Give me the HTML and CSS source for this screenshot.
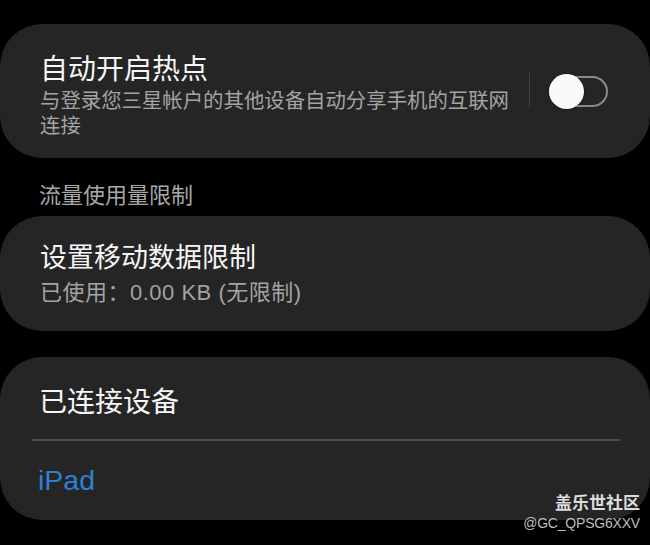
FILE: index.html
```html
<!DOCTYPE html>
<html lang="zh">
<head>
<meta charset="utf-8">
<link rel="stylesheet" href="styles.css">
</head>
<body>
<div class="page">
  <section class="card card-hotspot">
    <div class="hotspot-text">
      <div class="title">自动开启热点</div>
      <div class="sub">与登录您三星帐户的其他设备自动分享手机的互联网连接</div>
    </div>
    <div class="vdivider"></div>
    <div class="toggle"><span class="knob"></span></div>
  </section>

  <div class="section-header">流量使用量限制</div>

  <section class="card card-limit">
    <div class="title t27">设置移动数据限制</div>
    <div class="sub sub-limit">已使用：0.00 KB (无限制)</div>
  </section>

  <section class="card card-devices">
    <div class="title">已连接设备</div>
    <div class="hdivider"></div>
    <div class="device">iPad</div>
  </section>

  <div class="watermark">
    <div class="wm-title">盖乐世社区</div>
    <div class="wm-id">@GC_QPSG6XXV</div>
  </div>
</div>
</body>
</html>
```

FILE: styles.css
```css
* { box-sizing: border-box; }
html, body {
  margin: 0;
  padding: 0;
  background: #000;
}
body {
  font-family: "Noto Sans CJK SC", "Noto Sans", sans-serif;
  color: #f4f4f4;
  width: 650px;
  height: 545px;
  overflow: hidden;
}
.page {
  position: relative;
  height: 545px;
  display: flex;
  flex-direction: column;
  padding-top: 24px;
}
.card {
  background: #252525;
  border-radius: 42px;
  width: 650px;
}
.card-hotspot {
  height: 134px;
  display: flex;
  align-items: flex-start;
  padding: 25px 0 0 40px;
}
.hotspot-text {
  width: 480px;
}
.title {
  font-size: 28px;
  line-height: 36px;
  color: #f6f6f6;
}
.title.t27 { font-size: 27px; line-height: 34px; }
.sub {
  font-size: 20.4px;
  line-height: 24.5px;
  color: #a3a3a3;
  margin-top: 2px;
}
.vdivider {
  width: 1px;
  height: 34px;
  background: #444;
  margin: 24px 0 0 9px;
}
.toggle {
  position: relative;
  width: 59px;
  height: 31px;
  border: 2px solid #8a8a8a;
  border-radius: 16px;
  margin: 27px 0 0 19px;
}
.knob {
  position: absolute;
  left: -2px;
  top: -4px;
  width: 35px;
  height: 35px;
  border-radius: 50%;
  background: #fafafa;
  box-shadow: 0 0 2px rgba(0,0,0,0.6);
}
.section-header {
  font-size: 22px;
  line-height: 28px;
  color: #a8a8a8;
  padding: 21px 0 9px 39px;
}
.card-limit {
  height: 115px;
  padding: 23px 0 0 40px;
}
.sub-limit {
  font-family: "Liberation Sans", "Noto Sans CJK SC", sans-serif;
  margin-top: 7px;
  font-size: 22px;
  line-height: 26px;
  letter-spacing: 0.5px;
}
.card-devices {
  margin-top: 26px;
  height: 163px;
  padding-top: 25px;
  display: flex;
  flex-direction: column;
}
.card-devices .title {
  padding-left: 39px;
}
.hdivider {
  height: 2px;
  background: #4a4a4a;
  margin: 21px 30px 0 32px;
}
.device {
  font-family: "Liberation Sans", "Noto Sans CJK SC", sans-serif;
  font-size: 28.5px;
  line-height: 36px;
  color: #2d7fd2;
  padding-left: 38px;
  margin-top: 21px;
}
.watermark {
  position: absolute;
  right: 10px;
  top: 490px;
  text-align: right;
}
.wm-title {
  font-size: 17px;
  line-height: 23px;
  font-weight: 700;
  color: #dcdcdc;
}
.wm-id {
  font-family: "Liberation Sans", sans-serif;
  font-size: 14px;
  line-height: 21px;
  color: #bdbdbd;
  letter-spacing: -0.2px;
}
```
